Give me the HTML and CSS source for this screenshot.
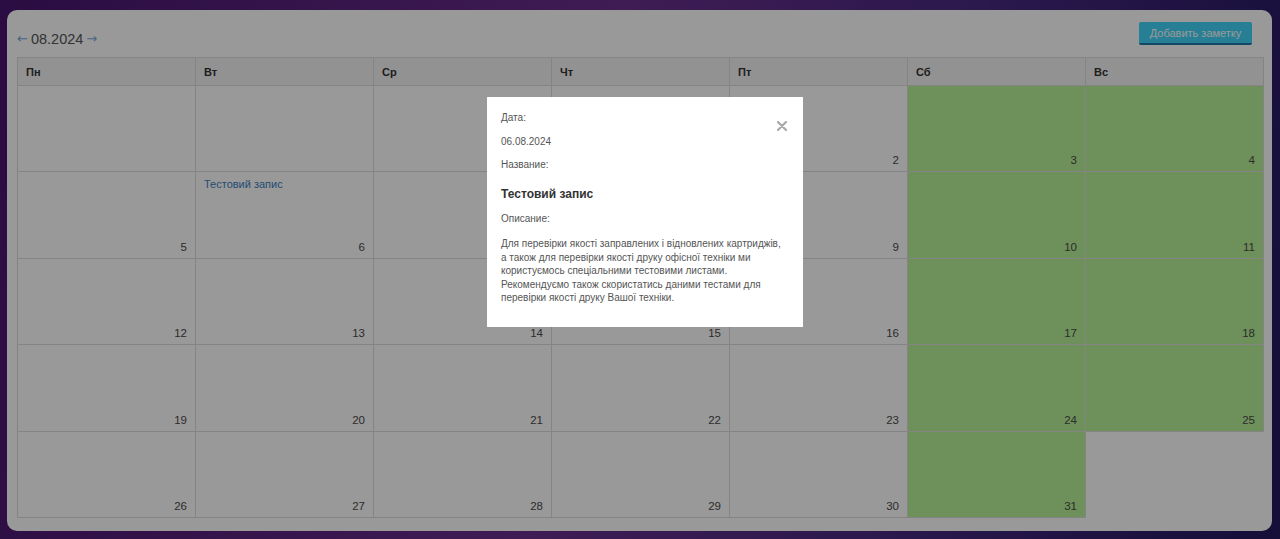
FILE: index.html
```html
<!DOCTYPE html>
<html lang="ru">
<head>
<meta charset="utf-8">
<title>Календарь</title>
<link rel="stylesheet" href="styles.css">
</head>
<body>
<div class="page">
  <div class="panel">
    <div class="toolbar">
      <div class="month-nav">
        <a class="arrow" href="#">&larr;</a>
        <span class="month">08.2024</span>
        <a class="arrow" href="#">&rarr;</a>
      </div>
      <button class="btn-add">Добавить заметку</button>
    </div>
    <div class="calendar">
      <div class="head">Пн</div>
      <div class="head">Вт</div>
      <div class="head">Ср</div>
      <div class="head">Чт</div>
      <div class="head">Пт</div>
      <div class="head">Сб</div>
      <div class="head">Вс</div>

      <div class="day"></div>
      <div class="day"></div>
      <div class="day"></div>
      <div class="day"><span class="num">1</span></div>
      <div class="day"><span class="num">2</span></div>
      <div class="day weekend"><span class="num">3</span></div>
      <div class="day weekend"><span class="num">4</span></div>

      <div class="day"><span class="num">5</span></div>
      <div class="day"><a class="event" href="#">Тестовий запис</a><span class="num">6</span></div>
      <div class="day"><span class="num">7</span></div>
      <div class="day"><span class="num">8</span></div>
      <div class="day"><span class="num">9</span></div>
      <div class="day weekend"><span class="num">10</span></div>
      <div class="day weekend"><span class="num">11</span></div>

      <div class="day"><span class="num">12</span></div>
      <div class="day"><span class="num">13</span></div>
      <div class="day"><span class="num">14</span></div>
      <div class="day"><span class="num">15</span></div>
      <div class="day"><span class="num">16</span></div>
      <div class="day weekend"><span class="num">17</span></div>
      <div class="day weekend"><span class="num">18</span></div>

      <div class="day"><span class="num">19</span></div>
      <div class="day"><span class="num">20</span></div>
      <div class="day"><span class="num">21</span></div>
      <div class="day"><span class="num">22</span></div>
      <div class="day"><span class="num">23</span></div>
      <div class="day weekend"><span class="num">24</span></div>
      <div class="day weekend"><span class="num">25</span></div>

      <div class="day"><span class="num">26</span></div>
      <div class="day"><span class="num">27</span></div>
      <div class="day"><span class="num">28</span></div>
      <div class="day"><span class="num">29</span></div>
      <div class="day"><span class="num">30</span></div>
      <div class="day weekend"><span class="num">31</span></div>
    </div>
  </div>
</div>

<div class="backdrop">
  <div class="modal">
    <button class="close" aria-label="Закрыть">
      <svg width="10" height="10" viewBox="0 0 10 10"><path d="M1 1L9 9M9 1L1 9" stroke="#a9a9a9" stroke-width="2.2" stroke-linecap="round"/></svg>
    </button>
    <p class="label">Дата:</p>
    <p class="value">06.08.2024</p>
    <p class="label">Название:</p>
    <h3 class="title">Тестовий запис</h3>
    <p class="label">Описание:</p>
    <p class="desc">Для перевірки якості заправлених і відновлених картриджів, а також для перевірки якості друку офісної техніки ми користуємось спеціальними тестовими листами. Рекомендуємо також скористатись даними тестами для перевірки якості друку Вашої техніки.</p>
  </div>
</div>
</body>
</html>
```

FILE: styles.css
```css
* { box-sizing: border-box; }

html, body {
  margin: 0;
  height: 539px;
  overflow: hidden;
}

body {
  font-family: "Liberation Sans", Arial, sans-serif;
  background: linear-gradient(100deg, #48156e 0%, #6a2f8c 45%, #4a2a82 70%, #22185f 100%);
  color: #555;
}

.page {
  padding: 10px 8px 8px 7px;
  height: 539px;
}

.panel {
  background: #fff;
  border-radius: 10px;
  height: 521px;
  padding: 12px 9px 14px 10px;
}

.toolbar {
  display: flex;
  justify-content: space-between;
  align-items: flex-start;
  height: 35px;
  padding-right: 11px;
}

.month-nav {
  display: flex;
  align-items: center;
  gap: 3px;
  margin-top: 8px;
}

.arrow {
  font-family: "DejaVu Sans", sans-serif;
  color: #7aa8dc;
  text-decoration: none;
  font-size: 13px;
  line-height: 18px;
}

.month {
  font-size: 14.5px;
  line-height: 18px;
  color: #555;
}

.btn-add {
  width: 113px;
  height: 23px;
  background: #40d4f8;
  border: none;
  border-bottom: 2px solid #1f78a8;
  border-radius: 2px;
  color: #fff;
  font-family: "Liberation Sans", Arial, sans-serif;
  font-size: 11px;
  padding: 0;
}

.calendar {
  display: grid;
  grid-template-columns: repeat(7, 178px);
  grid-template-rows: 28px repeat(5, 86.4px);
  border-top: 1px solid #dcdcdc;
  border-left: 1px solid #dcdcdc;
  width: 1247px;
}

.head {
  background: #f4f4f4;
  border-right: 1px solid #dcdcdc;
  border-bottom: 1px solid #dcdcdc;
  font-weight: 700;
  font-size: 11px;
  color: #333;
  display: flex;
  align-items: center;
  padding-left: 8px;
}

.day {
  border-right: 1px solid #dcdcdc;
  border-bottom: 1px solid #dcdcdc;
  display: flex;
  flex-direction: column;
  justify-content: flex-end;
  padding: 6px 8px 3px 8px;
}

.day.weekend {
  background: #b8f197;
}

.num {
  align-self: flex-end;
  font-size: 11.5px;
  color: #4a4a4a;
  line-height: 15px;
}

.event {
  font-size: 11px;
  color: #3a80c2;
  text-decoration: none;
  line-height: 13px;
  margin-bottom: auto;
}

.backdrop {
  position: fixed;
  inset: 0;
  background: rgba(0, 0, 0, 0.4);
}

.modal {
  position: absolute;
  left: 487px;
  top: 97px;
  width: 316px;
  height: 230px;
  background: #fff;
  padding: 14px 14px;
  font-size: 10px;
  color: #555;
}

.close {
  position: absolute;
  right: 16px;
  top: 24px;
  border: none;
  background: none;
  padding: 0;
  width: 10px;
  height: 10px;
  display: block;
}

.close svg { display: block; }

.label, .value {
  margin: 0 0 9.5px;
  line-height: 14px;
}

.title {
  margin: 14px 0 10px;
  font-size: 12px;
  line-height: 16px;
  font-weight: 700;
  color: #333;
}

.desc {
  margin: 11px 0 0;
  line-height: 13.6px;
}
```
